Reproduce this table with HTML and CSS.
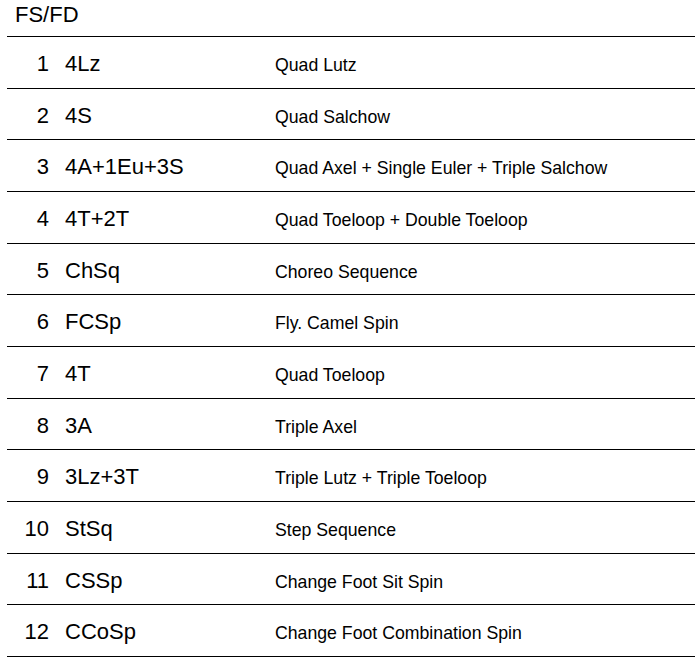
FILE: index.html
```html
<!DOCTYPE html>
<html>
<head>
<meta charset="utf-8">
<link rel="stylesheet" href="styles.css">
</head>
<body>
<div class="sheet">
  <div class="title">FS/FD</div>
  <div class="table">
    <div class="row"><span class="num">1</span><span class="code">4Lz</span><span class="desc">Quad Lutz</span></div>
    <div class="row"><span class="num">2</span><span class="code">4S</span><span class="desc">Quad Salchow</span></div>
    <div class="row"><span class="num">3</span><span class="code">4A+1Eu+3S</span><span class="desc">Quad Axel + Single Euler + Triple Salchow</span></div>
    <div class="row"><span class="num">4</span><span class="code">4T+2T</span><span class="desc">Quad Toeloop + Double Toeloop</span></div>
    <div class="row"><span class="num">5</span><span class="code">ChSq</span><span class="desc">Choreo Sequence</span></div>
    <div class="row"><span class="num">6</span><span class="code">FCSp</span><span class="desc">Fly. Camel Spin</span></div>
    <div class="row"><span class="num">7</span><span class="code">4T</span><span class="desc">Quad Toeloop</span></div>
    <div class="row"><span class="num">8</span><span class="code">3A</span><span class="desc">Triple Axel</span></div>
    <div class="row"><span class="num">9</span><span class="code">3Lz+3T</span><span class="desc">Triple Lutz + Triple Toeloop</span></div>
    <div class="row"><span class="num">10</span><span class="code">StSq</span><span class="desc">Step Sequence</span></div>
    <div class="row"><span class="num">11</span><span class="code">CSSp</span><span class="desc">Change Foot Sit Spin</span></div>
    <div class="row"><span class="num">12</span><span class="code">CCoSp</span><span class="desc">Change Foot Combination Spin</span></div>
  </div>
</div>
</body>
</html>
```
FILE: styles.css
```css
html, body {
  margin: 0;
  padding: 0;
  background: #fff;
}
body {
  font-family: "Liberation Sans", Arial, sans-serif;
  color: #000;
}
.sheet {
  padding-left: 7px;
}
.title {
  height: 36px;
  box-sizing: border-box;
  padding: 2px 0 0 8px;
  font-size: 22px;
  line-height: 25px;
}
.table {
  border-bottom: 1px solid #000;
}
.row {
  display: grid;
  grid-template-columns: 58px 210px 1fr;
  align-items: baseline;
  height: 51.67px;
  box-sizing: border-box;
  border-top: 1px solid #000;
  padding-top: 14px;
}
.num {
  text-align: right;
  padding-right: 16px;
  font-size: 22px;
  line-height: 25px;
}
.code {
  font-size: 22px;
  line-height: 25px;
}
.desc {
  font-size: 17.7px;
  line-height: 25px;
}
```
